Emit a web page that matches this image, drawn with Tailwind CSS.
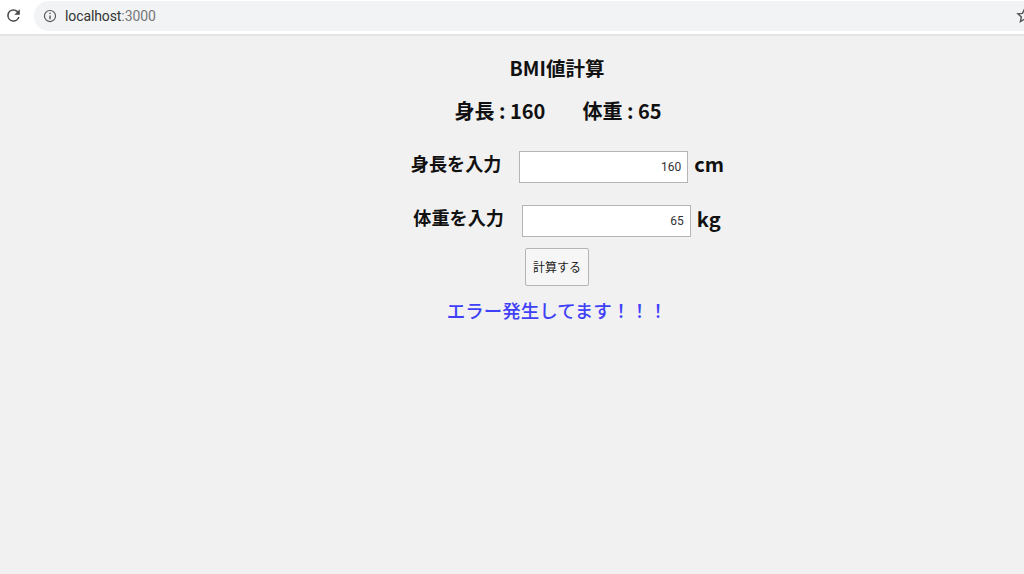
<!doctype html>
<html lang="ja">
<head>
<meta charset="utf-8">
<script src="https://cdn.jsdelivr.net/npm/@tailwindcss/browser@4"></script>
</head>
<body class="m-0 w-[1024px] h-[574px] overflow-hidden bg-[#f1f1f1] font-['Noto_Sans_CJK_JP','Noto_Sans',sans-serif] text-[#111]">
<header class="h-[36px] bg-white border-b-[2px] border-[#e4e4e4] flex items-start overflow-hidden relative">
  <svg class="w-[19px] h-[19px] ml-[4px] mt-[6px] shrink-0" viewBox="0 0 24 24" fill="#4a4a4a"><path d="M17.65 6.35A7.96 7.96 0 0 0 12 4a8 8 0 1 0 7.73 10h-2.08A6 6 0 1 1 12 6c1.66 0 3.14.69 4.22 1.78L13 11h7V4l-2.35 2.35z"/></svg>
  <div class="ml-[11px] mt-px flex-1 h-[30px] rounded-l-full bg-[#f1f3f4] flex items-center pl-[9px]">
    <svg class="w-[14px] h-[14px] shrink-0" viewBox="0 0 24 24" fill="none" stroke="#555" stroke-width="2"><circle cx="12" cy="12" r="9.5"/><path d="M12 11v6.5M12 6.5v2.2" stroke-width="2.4"/></svg>
    <span class="ml-[8px] text-[14px] font-['Roboto',sans-serif] text-[#333] tracking-[-0.1px]">localhost<span class="text-[#777]">:3000</span></span>
  </div>
  <div class="absolute left-[1016px] top-[7px] w-[8px] h-[17px] overflow-hidden">
    <svg class="w-[17px] h-[17px] max-w-none" viewBox="0 0 24 24" fill="none" stroke="#555" stroke-width="2"><path d="M12 3l2.800 6 6.500.7-4.900 4.400 1.400 6.400L12 17.200l-5.800 3.300 1.400-6.400L2.700 9.700l6.500-.7z"/></svg>
  </div>
</header>
<main class="flex flex-col items-center w-full pl-[90px] font-bold">
  <h1 class="text-[19.500px] leading-[26px] mt-[19px] font-bold">BMI値計算</h1>
  <p class="text-[20px] leading-[30px] mt-[15px] ml-[2px] flex gap-[37px]"><span>身長 : 160</span><span>体重 : 65</span></p>
  <div class="flex items-center mt-[25px] text-[18.100px] leading-[32px] h-[32px] ml-[21px]">
    <label class="pb-[9px]">身長を入力</label>
    <input class="ml-[18px] w-[169px] h-[32px] bg-white border border-[#b5b5b5] text-right text-[12px] font-normal pr-[6px] font-['Roboto',sans-serif] text-[#333]" value="160">
    <span class="ml-[6px] text-[20px] pb-[7px]">cm</span>
  </div>
  <div class="flex items-center mt-[22px] text-[18.100px] leading-[32px] h-[32px] ml-[20px]">
    <label class="pb-[8px]">体重を入力</label>
    <input class="ml-[18px] w-[169px] h-[32px] bg-white border border-[#b5b5b5] text-right text-[12px] font-normal pr-[6px] font-['Roboto',sans-serif] text-[#333]" value="65">
    <span class="ml-[6px] text-[20px] pb-[5px]">kg</span>
  </div>
  <button class="mt-[11px] w-[64px] h-[38px] rounded-[2px] border border-[#b5b5b5] bg-[#f6f6f6] text-[12px] font-normal text-[#222]">計算する</button>
  <p class="mt-[9px] text-[18.500px] leading-[30px] font-medium text-[#4040f8]">エラー発生してます！！！</p>
</main>
</body>
</html>
